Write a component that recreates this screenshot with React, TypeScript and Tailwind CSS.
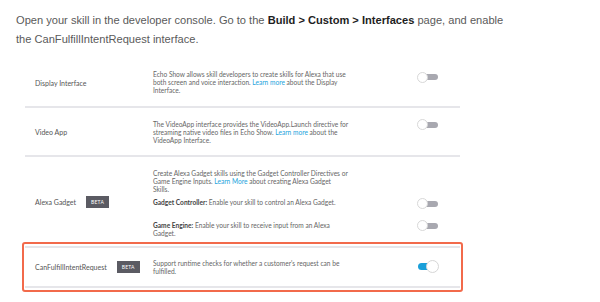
import React from "react";

function Toggle({ on = false }: { on?: boolean }) {
  if (on) {
    return (
      <div className="relative w-[22px] h-[13px] shrink-0">
        <div className="absolute left-[1px] top-[3px] w-[14px] h-[7px] rounded-full bg-[#1a9fd9]" />
        <div className="absolute right-0 top-0 w-[13px] h-[13px] rounded-full bg-white border border-[#d6d6d6]" />
      </div>
    );
  }
  return (
    <div className="relative w-[21px] h-[11px] shrink-0">
      <div className="absolute right-0 top-[2.5px] w-[14px] h-[6px] rounded-r-full bg-[#a8a8b0]" />
      <div className="absolute left-0 top-0 w-[11px] h-[11px] rounded-full bg-white border border-[#d8d8d8]" />
    </div>
  );
}

function Beta() {
  return (
    <span className="inline-flex items-center justify-center w-[23px] h-[12px] bg-[#5b5b63] text-white text-[5px] tracking-[0.2px] ml-[10px]">
      BETA
    </span>
  );
}

const Link = ({ children }: { children: React.ReactNode }) => (
  <span className="text-[#23a3dc]">{children}</span>
);

export default function App() {
  return (
    <div
      className="w-[600px] h-[302px] bg-white overflow-hidden"
      style={{ fontFamily: "Lato, 'Open Sans', sans-serif" }}
    >
      <p
        className="pl-[16px] pt-[11px] pr-[80px] text-[11.1px] leading-[19px] text-[#5a5a5a]"
        style={{ fontFamily: "'Liberation Sans', Arial, sans-serif" }}
      >
        Open your skill in the developer console. Go to the{" "}
        <span className="font-bold text-[#1e1e1e]">Build &gt; Custom &gt; Interfaces</span> page, and enable
        the CanFulfillIntentRequest interface.
      </p>

      <div className="ml-[25px] w-[435px] mt-[11px] text-[6.6px] leading-[8px] text-[#666]">
        {/* Row 1 */}
        <div className="flex items-center h-[48px] border-b-2 border-[#e6e6ea]">
          <div className="w-[128px] pl-[10px] text-[7px] text-[#555]">Display Interface</div>
          <div className="w-[205px] -mt-[2px]">
            Echo Show allows skill developers to create skills for Alexa that use both screen and voice
            interaction. <Link>Learn more</Link> about the Display Interface.
          </div>
          <div className="ml-[59px] -mt-[12px]">
            <Toggle />
          </div>
        </div>

        {/* Row 2 */}
        <div className="flex items-center h-[49px] border-b-2 border-[#e6e6ea]">
          <div className="w-[128px] pl-[10px] text-[7px] text-[#555]">Video App</div>
          <div className="w-[205px]">
            The VideoApp interface provides the VideoApp.Launch directive for streaming native video files
            in Echo Show. <Link>Learn more</Link> about the VideoApp Interface.
          </div>
          <div className="ml-[59px] -mt-[14px]">
            <Toggle />
          </div>
        </div>

        {/* Row 3 */}
        <div className="flex h-[84px] pt-[12px]">
          <div className="w-[128px] pl-[10px] pt-[27px] text-[7px] text-[#555] flex items-center h-fit">
            <span>Alexa Gadget</span>
            <Beta />
          </div>
          <div className="w-[290px]">
            <div className="w-[205px]">
              Create Alexa Gadget skills using the Gadget Controller Directives or Game Engine Inputs.{" "}
              <Link>Learn More</Link> about creating Alexa Gadget
              <br />
              Skills.
            </div>
            <div className="flex items-center mt-[1px]">
              <div className="w-[205px]">
                <span className="font-bold text-[#444]">Gadget Controller:</span> Enable your skill to control an
                Alexa Gadget.
              </div>
              <div className="ml-[59px] mt-[4px]">
                <Toggle />
              </div>
            </div>
            <div className="flex items-start mt-[12px]">
              <div className="w-[205px]">
                <span className="font-bold text-[#444]">Game Engine:</span> Enable your skill to receive input from
                an Alexa
                <br />
                Gadget.
              </div>
              <div className="ml-[59px] mt-[-1px]">
                <Toggle />
              </div>
            </div>
          </div>
        </div>

        {/* Highlighted row */}
        <div className="-ml-[3px] w-[441px] h-[50px] mt-[1px] border-2 border-[#f26a4b] rounded-[3px] pt-[2px] px-[1px]">
          <div className="flex items-center h-[42px] border-t-2 border-b-2 border-[#e6e6ea]">
            <div className="w-[128px] pl-[10px] text-[7px] text-[#555] flex items-center">
              <span>CanFulfillIntentRequest</span>
              <Beta />
            </div>
            <div className="w-[205px]">
              Support runtime checks for whether a customer's request can be fulfilled.
            </div>
            <div className="ml-[59px] -mt-[2px]">
              <Toggle on />
            </div>
          </div>
        </div>
      </div>
    </div>
  );
}
